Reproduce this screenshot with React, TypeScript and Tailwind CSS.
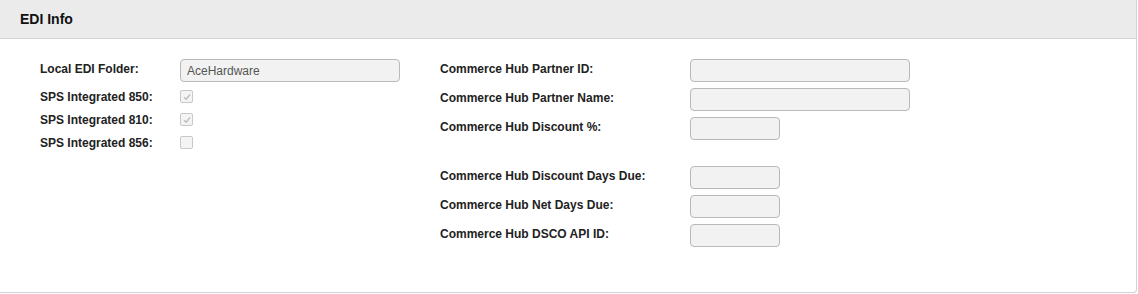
const inputClass =
	"h-[23px] rounded-[4px] border border-[#b9b9b9] bg-[#f2f2f2] px-[6px] text-[12px] text-[#555] outline-none";

function Row({ label, width, labelWidth }: { label: string; width: string; labelWidth: string }) {
	return (
		<div className="flex h-[23px] items-center">
			<div className={`${labelWidth} -mt-[4px] font-bold`}>{label}</div>
			<input disabled className={`${inputClass} ${width}`} />
		</div>
	);
}

function CheckRow({ label, checked }: { label: string; checked: boolean }) {
	return (
		<div className="flex h-[23px] items-center">
			<div className="w-[140px] font-bold">{label}</div>
			<span className="flex h-[13px] w-[13px] items-center justify-center rounded-[2px] border border-[#c8c8c8] bg-[#f4f4f4]">
				{checked && (
					<svg viewBox="0 0 12 12" className="h-[10px] w-[10px]">
						<path d="M2.5 6.2 5 8.6 9.6 3" fill="none" stroke="#bdbdbd" strokeWidth="1.6" />
					</svg>
				)}
			</span>
		</div>
	);
}

export default function App() {
	return (
		<div className="h-[294px] w-[1138px] bg-white font-['Liberation_Sans',Arial,sans-serif] text-[12px] text-[#222]">
			<div className="h-[293px] w-[1137px] overflow-hidden rounded-br-[4px] border-r border-b border-[#d2d2d2]">
				<div className="flex h-[39px] items-center border-b border-[#d4d4d4] bg-[#ebebec] pl-[20px] text-[14px] font-bold text-[#111]">
					EDI Info
				</div>
				<div className="flex pl-[40px] pt-[20px]">
					<div className="w-[400px]">
						<div className="flex h-[23px] items-center">
							<div className="-mt-[4px] w-[140px] font-bold">Local EDI Folder:</div>
							<input disabled value="AceHardware" className={`${inputClass} w-[220px]`} />
						</div>
						<div className="mt-[3px]">
							<CheckRow label="SPS Integrated 850:" checked />
							<CheckRow label="SPS Integrated 810:" checked />
							<CheckRow label="SPS Integrated 856:" checked={false} />
						</div>
					</div>
					<div className="flex flex-col gap-[6px]">
						<Row label="Commerce Hub Partner ID:" width="w-[220px]" labelWidth="w-[250px]" />
						<Row label="Commerce Hub Partner Name:" width="w-[220px]" labelWidth="w-[250px]" />
						<Row label="Commerce Hub Discount %:" width="w-[90px]" labelWidth="w-[250px]" />
						<div className="mt-[20px] flex flex-col gap-[6px]">
							<Row label="Commerce Hub Discount Days Due:" width="w-[90px]" labelWidth="w-[250px]" />
							<Row label="Commerce Hub Net Days Due:" width="w-[90px]" labelWidth="w-[250px]" />
							<Row label="Commerce Hub DSCO API ID:" width="w-[90px]" labelWidth="w-[250px]" />
						</div>
					</div>
				</div>
			</div>
		</div>
	);
}
